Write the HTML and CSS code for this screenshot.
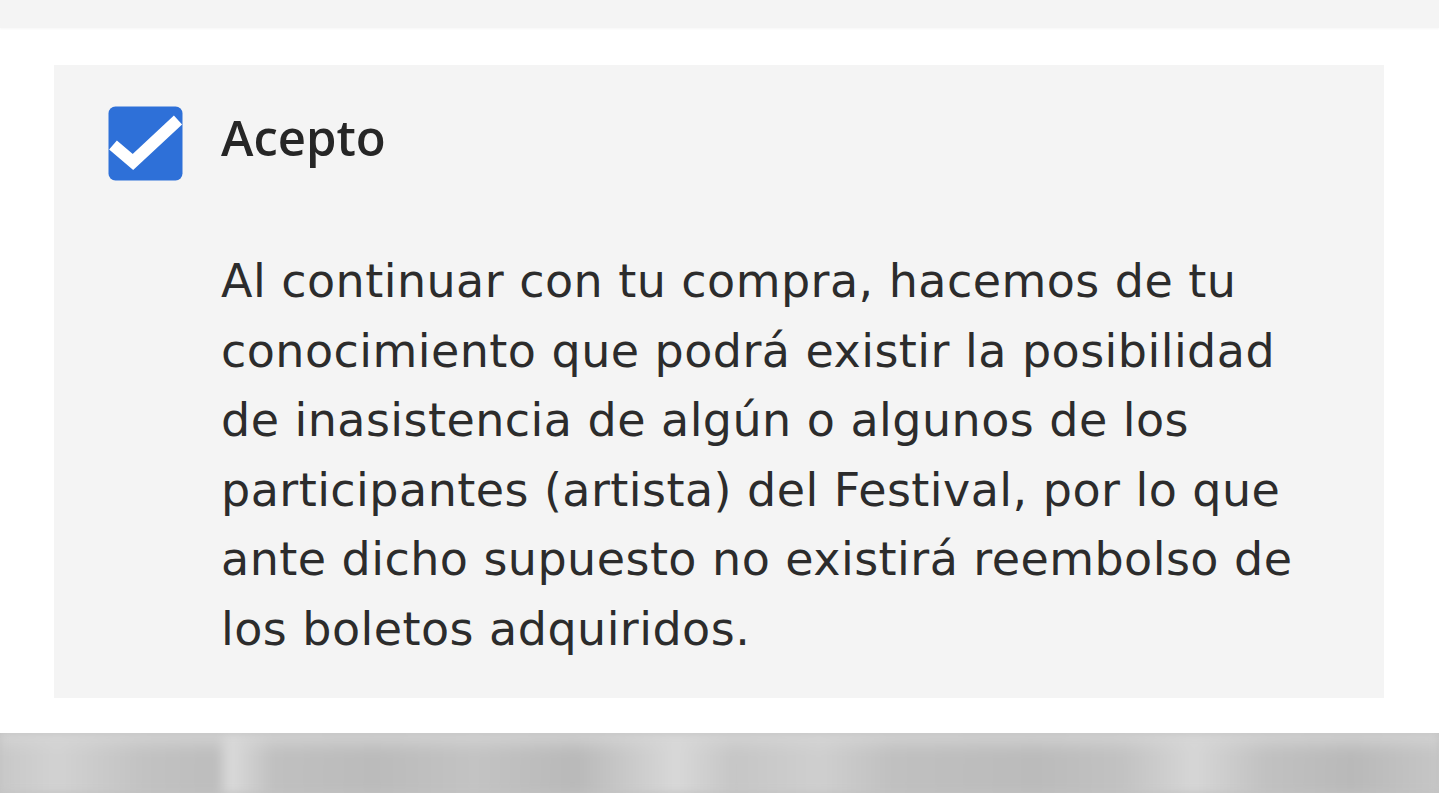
FILE: index.html
```html
<!DOCTYPE html>
<html lang="es">
<head>
<meta charset="utf-8">
<title>Acepto</title>
<link rel="stylesheet" href="styles.css">
</head>
<body>
<div class="topbar"></div>
<main class="wrap">
  <section class="panel">
    <div class="check">
      <svg width="75" height="75" viewBox="0 0 75 75">
        <rect x="0.5" y="0.5" width="74" height="74" rx="7" fill="#2e70d8"/>
        <polyline points="5,39 25,56 70,14" fill="none" stroke="#ffffff" stroke-width="12" stroke-linejoin="miter"/>
      </svg>
    </div>
    <div class="content">
      <h2 class="title">Acepto</h2>
      <p class="text">Al continuar con tu compra, hacemos de tu<br>conocimiento que podrá existir la posibilidad<br>de inasistencia de algún o algunos de los<br>participantes (artista) del Festival, por lo que<br>ante dicho supuesto no existirá reembolso de<br>los boletos adquiridos.</p>
    </div>
  </section>
</main>
<div class="blurband">
  <div class="blurinner"></div>
</div>
</body>
</html>
```
FILE: styles.css
```css
html, body {
  margin: 0;
  padding: 0;
  background: #ffffff;
  height: 793px;
  overflow: hidden;
  font-family: "DejaVu Sans", "Open Sans", sans-serif;
  font-variant-ligatures: none;
  color: #2a2a2a;
}
.topbar {
  height: 28px;
  background: #f4f4f4;
  box-shadow: 0 1px 2px rgba(0,0,0,0.04);
}
.wrap {
  padding: 37px 55px 0 54px;
}
.panel {
  background: #f4f4f4;
  height: 633px;
  box-sizing: border-box;
  padding: 41px 0 0 54px;
  display: grid;
  grid-template-columns: 75px 1fr;
  column-gap: 38px;
  align-items: start;
}
.check svg {
  display: block;
}
.title {
  margin: 0;
  font-family: "Open Sans", "DejaVu Sans", sans-serif;
  font-size: 49px;
  font-weight: 600;
  line-height: 62px;
  color: #262626;
}
.text {
  margin: 79px 0 0 0;
  font-size: 46px;
  letter-spacing: 0.45px;
  line-height: 69.5px;
  font-weight: 400;
  color: #2c2c2c;
}
.blurband {
  margin-top: 35px;
  height: 60px;
  overflow: hidden;
  background: #c4c4c4;
}
.blurinner {
  height: 100%;
  background:
    linear-gradient(180deg, rgba(215,215,215,0.8) 0%, rgba(200,200,200,0) 35%),
    linear-gradient(90deg, #c8c8c8 0%, #d2d2d2 4%, #c2c2c2 10%, #bdbdbd 15%, #dadada 16%, #c0c0c0 19%, #bbbbbb 26%, #c3c3c3 33%, #b9b9b9 40%, #d8d8d8 47%, #c6c6c6 51%, #cfcfcf 57%, #c0c0c0 62%, #bbbbbb 72%, #c2c2c2 78%, #d6d6d6 83%, #c1c1c1 88%, #b9b9b9 94%, #c6c6c6 100%);
  filter: blur(4px);
}
```
